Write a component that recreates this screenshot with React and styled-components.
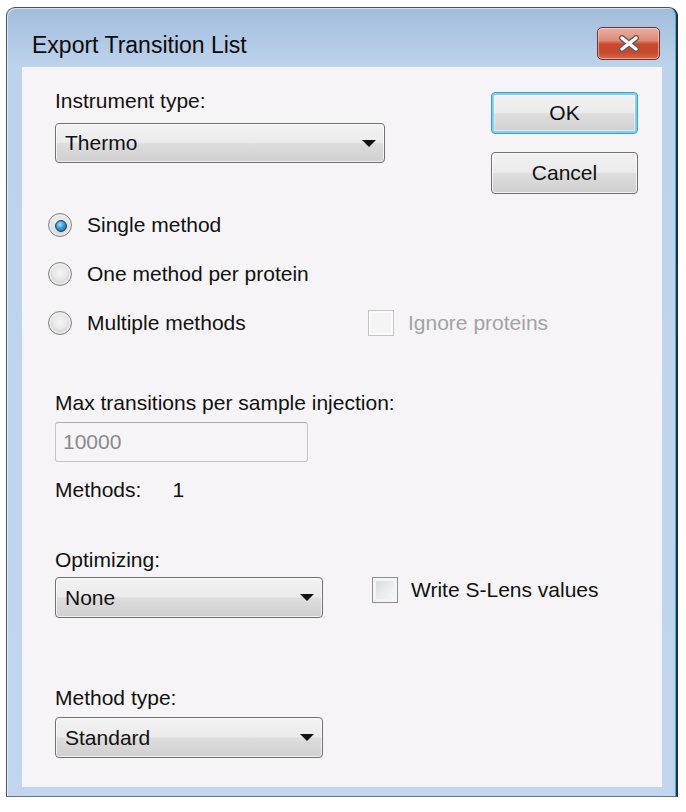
import React from "react";
import styled, { createGlobalStyle } from "styled-components";

const Global = createGlobalStyle`
  html, body { margin: 0; padding: 0; background: #ffffff; }
  body { font-family: "Liberation Sans", Arial, sans-serif; color: #111111; }
  * { box-sizing: border-box; }
`;

const Window = styled.div`
  margin: 7px 0 0 6px;
  width: 672px;
  height: 790px;
  border: 1px solid #4a5262;
  border-right: 2px solid #2b3038;
  border-bottom-color: #6b7380;
  border-radius: 9px 9px 0 0;
  background: linear-gradient(to bottom, #a2bddb 0px, #b2cae6 36px, #bdd3ec 58px, #c1d6ee 100%);
  box-shadow: inset 1px 1px 0 rgba(255, 255, 255, 0.55), inset -1px 0 0 #38b4d8;
  padding: 0 14px 9px 15px;
  display: flex;
  flex-direction: column;
`;

const TitleBar = styled.div`
  height: 59px;
  display: flex;
  align-items: flex-start;
  justify-content: space-between;
  padding: 19px 2px 0 10px;
`;

const Title = styled.div`
  margin-top: 5px;
  font-size: 23px;
  line-height: 26px;
  color: #0a0a0a;
`;

const CloseButton = styled.div`
  width: 63px;
  height: 33px;
  border: 1px solid #6a3434;
  border-radius: 5px;
  background: linear-gradient(to bottom, #ebb0a4 0%, #de8a78 40%, #c9472d 52%, #c84a30 80%, #d86a48 100%);
  box-shadow: inset 0 0 0 1px rgba(255, 220, 210, 0.55);
  display: flex;
  align-items: center;
  justify-content: center;
`;

const Panel = styled.div`
  flex: 1;
  background: #f7f4f8;
  padding: 0 24px 0 33px;
  display: flex;
  flex-direction: column;
  align-items: flex-start;
`;

const TopSection = styled.div`
  width: 100%;
  display: flex;
  justify-content: space-between;
  align-items: flex-start;
`;

const Column = styled.div`
  display: flex;
  flex-direction: column;
  align-items: flex-start;
  margin-top: ${(p) => p.$top || 0}px;
  gap: ${(p) => p.$gap || 0}px;
`;

const Label = styled.div`
  font-size: 21px;
  line-height: 24px;
  white-space: nowrap;
  color: ${(p) => (p.$disabled ? "#a3a3a3" : "#111111")};
  margin-top: ${(p) => p.$top || 0}px;
`;

const Button = styled.div`
  width: 147px;
  height: 42px;
  border: 1px solid ${(p) => (p.$default ? "#3c9fd8" : "#707070")};
  border-radius: 4px;
  background: linear-gradient(to bottom, #f2f2f2 0%, #ebebeb 48%, #dddddd 52%, #cfcfcf 100%);
  box-shadow: ${(p) =>
    p.$default
      ? "inset 0 0 0 2px #7fd0f4, inset 0 0 0 3px rgba(255,255,255,0.5)"
      : "inset 0 0 0 1px rgba(255,255,255,0.75)"};
  font-size: 21px;
  display: flex;
  align-items: center;
  justify-content: center;
  color: #111111;
`;

const Combo = styled.div`
  width: ${(p) => p.$width}px;
  height: ${(p) => p.$height || 41}px;
  margin-top: ${(p) => p.$top || 0}px;
  border: 1px solid #707070;
  border-radius: 4px;
  background: linear-gradient(to bottom, #f2f2f2 0%, #ebebeb 48%, #dddddd 52%, #cfcfcf 100%);
  box-shadow: inset 0 0 0 1px rgba(255, 255, 255, 0.7);
  display: flex;
  align-items: center;
  justify-content: space-between;
  padding: 0 8px 0 9px;
  font-size: 21px;
`;

const Arrow = () => (
  <svg width="14" height="7" viewBox="0 0 14 7">
    <path d="M0 0 H14 L7 7 Z" fill="#111" />
  </svg>
);

const RadioList = styled.div`
  margin: 6px 0 0 -7px;
  display: flex;
  flex-direction: column;
`;

const OptionRow = styled.div`
  height: 49px;
  display: grid;
  grid-template-columns: 320px auto;
  align-items: center;
`;

const Choice = styled.div`
  display: flex;
  align-items: center;
  gap: ${(p) => p.$gap || 15}px;
`;

const RadioDot = styled.span`
  position: relative;
  width: 24px;
  height: 24px;
  border-radius: 50%;
  border: 1px solid #858585;
  background: radial-gradient(circle at 50% 45%, #f6f6f6 0%, #e8e8e8 42%, #cdcdcd 66%, #b4b4b4 100%);
  box-shadow: inset 0 0 0 2px rgba(255, 255, 255, 0.5);
  flex-shrink: 0;

  &::after {
    content: "";
    display: ${(p) => (p.$checked ? "block" : "none")};
    position: absolute;
    left: 6px;
    top: 6px;
    width: 10px;
    height: 10px;
    border-radius: 50%;
    border: 1px solid #1b3f64;
    background: radial-gradient(circle at 40% 35%, #a9e4ff 0%, #3ba0dd 40%, #125c9b 100%);
  }
`;

const CheckBox = styled.span`
  width: 26px;
  height: 26px;
  border: 1px solid ${(p) => (p.$disabled ? "#c4c4c4" : "#8e8f8f")};
  background: ${(p) =>
    p.$disabled
      ? "#f4f4f4"
      : "linear-gradient(135deg, #cfd3d8 0%, #e8e9eb 45%, #fbfbfb 100%)"};
  box-shadow: ${(p) =>
    p.$disabled ? "inset 0 0 0 2px #fbfbfb" : "inset 0 0 0 3px #f4f4f4"};
  flex-shrink: 0;
`;

const TextBox = styled.div`
  width: 253px;
  height: 40px;
  margin-top: ${(p) => p.$top || 0}px;
  border: 1px solid #c2c4c8;
  border-top-color: #acaeb3;
  border-radius: 3px;
  background: #f7f4f8;
  padding: 0 7px;
  display: flex;
  align-items: center;
  font-size: 21px;
  color: #8a8a8a;
`;

const CountRow = styled.div`
  margin-top: ${(p) => p.$top || 0}px;
  display: flex;
  gap: 31px;
  font-size: 21px;
  line-height: 24px;
`;

const FieldRow = styled.div`
  margin-top: ${(p) => p.$top || 0}px;
  display: flex;
  align-items: flex-start;
`;

const SideCheck = styled(Choice)`
  margin: 0 0 0 49px;
`;

export default function App() {
  return (
    <>
      <Global />
      <Window>
        <TitleBar>
          <Title>Export Transition List</Title>
          <CloseButton>
            <svg width="22" height="17" viewBox="0 0 22 17">
              <path d="M4 3 L18 14 M18 3 L4 14" stroke="#5b5b5b" strokeWidth="6" strokeLinecap="round" />
              <path d="M4 3 L18 14 M18 3 L4 14" stroke="#ffffff" strokeWidth="3.4" strokeLinecap="round" />
            </svg>
          </CloseButton>
        </TitleBar>
        <Panel>
          <TopSection>
            <Column $top={22} $gap={10}>
              <Label>Instrument type:</Label>
              <Combo $width={330} $height={40}>
                <span>Thermo</span>
                <Arrow />
              </Combo>
            </Column>
            <Column $top={25} $gap={18}>
              <Button $default>OK</Button>
              <Button>Cancel</Button>
            </Column>
          </TopSection>

          <RadioList>
            <OptionRow>
              <Choice>
                <RadioDot $checked />
                <Label>Single method</Label>
              </Choice>
            </OptionRow>
            <OptionRow>
              <Choice>
                <RadioDot />
                <Label>One method per protein</Label>
              </Choice>
            </OptionRow>
            <OptionRow>
              <Choice>
                <RadioDot />
                <Label>Multiple methods</Label>
              </Choice>
              <Choice $gap={14}>
                <CheckBox $disabled />
                <Label $disabled>Ignore proteins</Label>
              </Choice>
            </OptionRow>
          </RadioList>

          <Label $top={44}>Max transitions per sample injection:</Label>
          <TextBox $top={7}>10000</TextBox>
          <CountRow $top={16}>
            <span>Methods:</span>
            <span>1</span>
          </CountRow>

          <Label $top={46}>Optimizing:</Label>
          <FieldRow $top={5}>
            <Combo $width={268}>
              <span>None</span>
              <Arrow />
            </Combo>
            <SideCheck $gap={13}>
              <CheckBox />
              <Label>Write S-Lens values</Label>
            </SideCheck>
          </FieldRow>

          <Label $top={68}>Method type:</Label>
          <Combo $width={268} $top={7}>
            <span>Standard</span>
            <Arrow />
          </Combo>
        </Panel>
      </Window>
    </>
  );
}
